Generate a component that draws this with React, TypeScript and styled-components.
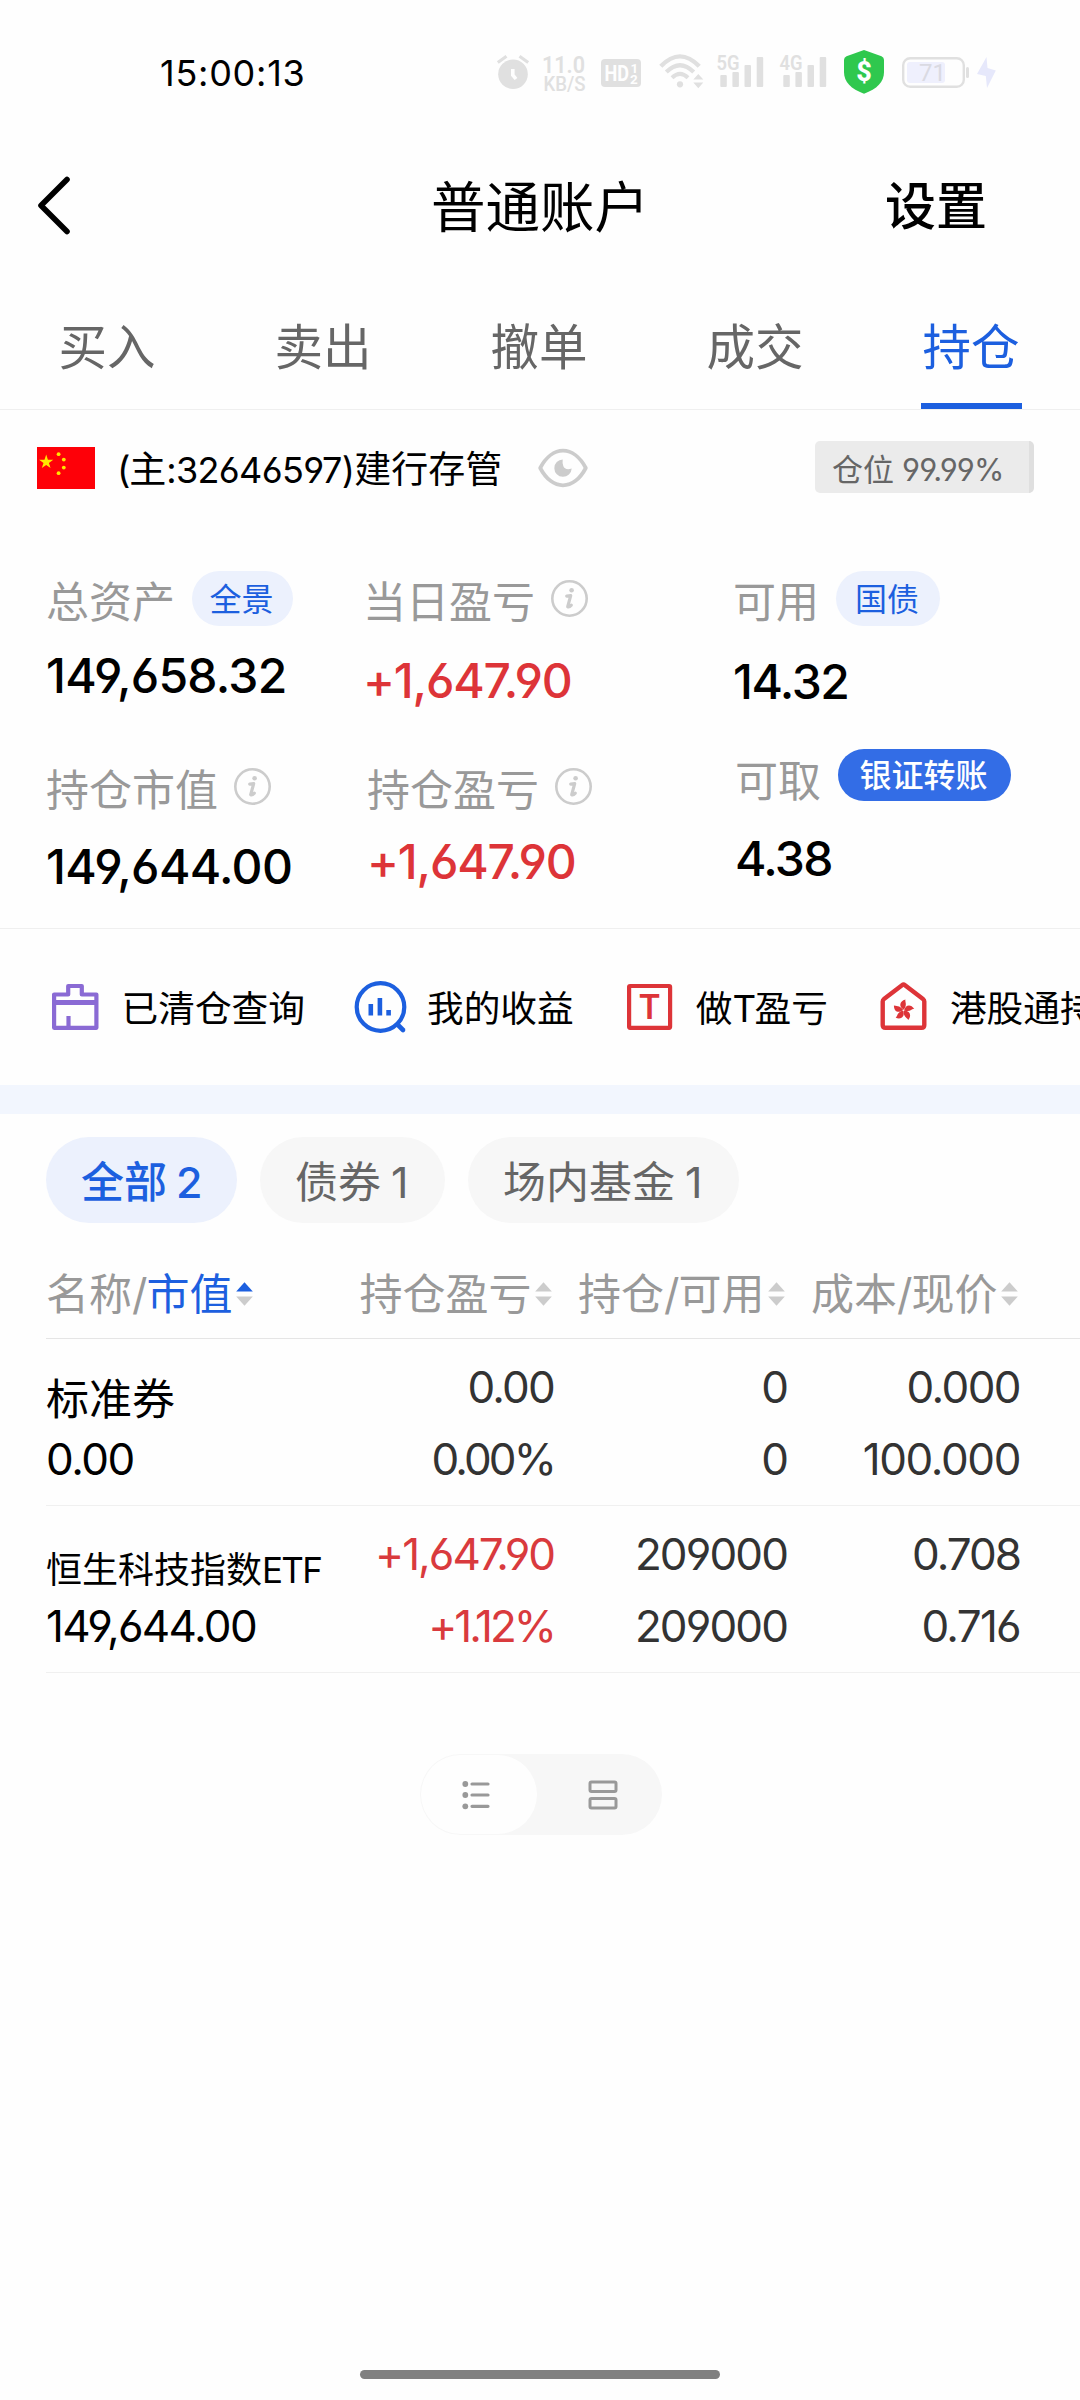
import React from "react";
import styled, { createGlobalStyle } from "styled-components";

const BLUE = "#1c5fdf";
const RED = "#dd3438";
const FAINT = "#e0e0e0";

const GlobalStyle = createGlobalStyle`
  * { box-sizing: border-box; }
  body { margin: 0; background: #fefefe; }
`;

const Page = styled.div`
  width: 1080px;
  height: 2400px;
  display: flex;
  flex-direction: column;
  overflow: hidden;
  background: #fefefe;
  color: #000;
  font-family: "Inter", "Noto Sans CJK SC", sans-serif;
  font-feature-settings: "cv03", "cv04";
  white-space: nowrap;
`;

const Icon = styled.svg<{ $ml?: number }>`
  display: block;
  flex: none;
  overflow: visible;
  margin-left: ${(p) => p.$ml ?? 0}px;
`;

/* ---------- status bar ---------- */

const StatusBar = styled.header`
  height: 144px;
  flex: none;
  display: flex;
  align-items: center;
  padding-left: 160px;
`;

const Clock = styled.div`
  width: 336px;
  padding-top: 1px;
  font-size: 36px;
  font-weight: 420;
  line-height: 44px;
  letter-spacing: 0.75px;
`;

/* ---------- title ---------- */

const TitleBar = styled.div`
  height: 123px;
  flex: none;
  display: grid;
  grid-template-columns: 200px 1fr 200px;
  align-items: center;
`;

const Title = styled.h1`
  margin: 0;
  padding-top: 2px;
  font-size: 54.5px;
  font-weight: 400;
  line-height: 64px;
  text-align: center;
`;

const Settings = styled.div`
  padding: 2px 0 0 5px;
  font-size: 51px;
  font-weight: 500;
  line-height: 64px;
`;

/* ---------- tabs ---------- */

const Tabs = styled.nav`
  height: 143px;
  flex: none;
  display: grid;
  grid-template-columns: repeat(5, 1fr);
  border-bottom: 1px solid #efefef;
`;

const Tab = styled.div<{ $active?: boolean }>`
  display: flex;
  flex-direction: column;
  align-items: center;
  padding: 51px 2px 0 0;
  font-size: 48.5px;
  line-height: 60px;
  color: ${(p) => (p.$active ? BLUE : "#666")};
`;

const TabMark = styled.div`
  width: 101px;
  height: 6px;
  margin-top: auto;
  background: ${BLUE};
`;

/* ---------- account ---------- */

const Account = styled.div`
  height: 115px;
  flex: none;
  display: flex;
  align-items: center;
  padding: 0 46px 0 37px;
`;

const AccountName = styled.div`
  width: 421px;
  margin-left: 22px;
  padding-top: 4px;
  font-size: 37px;
  line-height: 44px;
`;

const Position = styled.div`
  width: 219px;
  height: 52px;
  margin: 0 0 2px auto;
  padding: 2px 0 0 17px;
  border-radius: 5px;
  border-right: 5px solid #dfdfdf;
  background: #ebebeb;
  color: #666;
  font-size: 31px;
  line-height: 54px;
`;

const Num = styled.span<{ $track?: number; $size?: number; $ml?: number }>`
  letter-spacing: ${(p) => p.$track ?? 0}px;
  font-size: ${(p) => (p.$size ? p.$size + "px" : "inherit")};
  margin-left: ${(p) => p.$ml ?? 0}px;
`;

/* ---------- figures ---------- */

const Figures = styled.section`
  height: 404px;
  flex: none;
  padding-top: 46px;
  border-bottom: 1px solid #efefef;
`;

const FigureRow = styled.div<{ $cols: string }>`
  height: 178px;
  display: grid;
  grid-template-columns: ${(p) => p.$cols};
  padding-left: 46px;
`;

const Figure = styled.div<{ $top?: number }>`
  padding-top: ${(p) => p.$top ?? 0}px;
`;

const FigureHead = styled.div<{ $h?: number }>`
  height: ${(p) => p.$h ?? 55}px;
  display: flex;
  align-items: center;
`;

const FigureLabel = styled.span<{ $drop?: number }>`
  padding-top: ${(p) => p.$drop ?? 7}px;
  font-size: 43px;
  line-height: 50px;
  color: #999;
`;

const FigureValue = styled.div<{ $gap: number; $up?: boolean; $track?: number }>`
  margin-top: ${(p) => p.$gap}px;
  font-size: 48px;
  line-height: 60px;
  font-weight: 470;
  letter-spacing: ${(p) => p.$track ?? -1.2}px;
  color: ${(p) => (p.$up ? RED : "#000")};
`;

const Pill = styled.span<{ $w: number; $solid?: boolean }>`
  width: ${(p) => p.$w}px;
  height: ${(p) => (p.$solid ? 52 : 55)}px;
  margin-left: 17px;
  padding-right: 2px;
  border-radius: 28px;
  text-align: center;
  font-size: 32px;
  line-height: ${(p) => (p.$solid ? 54 : 58)}px;
  font-weight: ${(p) => (p.$solid ? 500 : 400)};
  color: ${(p) => (p.$solid ? "#fff" : BLUE)};
  background: ${(p) => (p.$solid ? "#336de6" : "#ecf1fd")};
`;

/* ---------- shortcuts ---------- */

const Shortcuts = styled.div`
  height: 156px;
  flex: none;
  display: flex;
  align-items: center;
  gap: 50.5px;
  padding-left: 50px;
  overflow: hidden;
`;

const Shortcut = styled.div`
  flex: none;
  display: flex;
  align-items: center;
  gap: 20.5px;
  font-size: 36.7px;
  line-height: 50px;
`;

const ShortcutText = styled.span`
  padding-top: 3px;
`;

const Band = styled.div`
  height: 29px;
  flex: none;
  background: #f2f6fe;
`;

/* ---------- filters ---------- */

const Chips = styled.div`
  height: 109px;
  flex: none;
  display: flex;
  gap: 23px;
  padding: 23px 0 0 46px;
`;

const Chip = styled.div<{ $w: number; $active?: boolean }>`
  width: ${(p) => p.$w}px;
  height: 86px;
  padding-left: 35px;
  border-radius: 43px;
  font-size: 43px;
  line-height: 90px;
  font-weight: ${(p) => (p.$active ? 500 : 400)};
  color: ${(p) => (p.$active ? BLUE : "#666")};
  background: ${(p) => (p.$active ? "#ecf1fd" : "#f7f7f7")};
`;

/* ---------- table ---------- */

const Table = styled.section`
  flex: none;
  margin-left: 46px;
`;

const HeadRow = styled.div`
  height: 116px;
  display: grid;
  grid-template-columns: 273px 233px 233px 233px;
  align-items: center;
  padding-top: 26px;
  border-bottom: 1px solid #e5e5e5;
  color: #999;
  font-size: 43px;
  line-height: 50px;
`;

const HeadCell = styled.div<{ $end?: boolean }>`
  display: flex;
  align-items: center;
  justify-content: ${(p) => (p.$end ? "flex-end" : "flex-start")};
`;

const Sorted = styled.span`
  color: ${BLUE};
`;

const Row = styled.div`
  height: 167px;
  display: grid;
  grid-template-columns: 275px 233px 233px 233px;
  border-bottom: 1px solid #f0f0f0;
  font-size: 44px;
  line-height: 52px;
`;

const NameCell = styled.div<{ $top: number }>`
  padding-top: ${(p) => p.$top}px;
  display: flex;
  flex-direction: column;
`;

const Name = styled.div<{ $size: number; $gap: number }>`
  font-size: ${(p) => p.$size}px;
  margin-bottom: ${(p) => p.$gap}px;
`;

const NumCell = styled.div<{ $up?: boolean }>`
  padding-top: 22px;
  display: flex;
  flex-direction: column;
  align-items: flex-end;
  gap: 20px;
  color: ${(p) => (p.$up ? "#d93a3d" : "#333")};
`;

/* ---------- bottom ---------- */

const Toggle = styled.div`
  width: 242px;
  height: 81px;
  flex: none;
  margin: 81px 0 0 420px;
  padding: 1px;
  display: flex;
  border-radius: 41px;
  background: #f7f7f7;
`;

const ToggleSide = styled.div<{ $on?: boolean }>`
  width: ${(p) => (p.$on ? 116 : 124)}px;
  flex: none;
  display: flex;
  align-items: center;
  justify-content: center;
  padding: ${(p) => (p.$on ? "0 6px 0 0" : "0 0 0 8px")};
  border-radius: 40px;
  background: ${(p) => (p.$on ? "#fefefe" : "transparent")};
`;

const HomeIndicator = styled.div`
  width: 360px;
  height: 9px;
  flex: none;
  margin: auto auto 21px;
  border-radius: 5px;
  background: #808080;
`;

const Info = () => (
  <Icon $ml={16} width="37" height="37" viewBox="-18.5 -18.5 37 37" fill="none" stroke="#ccc" strokeLinecap="round" strokeLinejoin="round">
    <circle r="17.2" strokeWidth="2.6" />
    <circle cx="2.1" cy="-8.2" r="2.3" fill="#ccc" stroke="none" />
    <path d="M-2.8 -2.4L1.2 -2.8L-1.8 8.2Q-0.2 8.8 1.8 6.6" strokeWidth="3.2" />
  </Icon>
);

const Arrows = ({ up }: { up?: boolean }) => (
  <Icon $ml={3.5} width="17" height="24" viewBox="0 0 17 24">
    <path d="M8.5 0.3L16.8 9.6H0.2Z" fill={up ? BLUE : "#ccc"} />
    <path d="M8.5 23.7L16.8 14.4H0.2Z" fill="#ccc" />
  </Icon>
);

const Signal = ({ label, ml }: { label: string; ml: number }) => (
  <Icon $ml={ml} width="48" height="44" viewBox="716 50 48 44" fill={FAINT}>
    <text x="716.5" y="70" fontFamily="Roboto" fontSize="20.5" fontWeight="600" textLength="23" lengthAdjust="spacingAndGlyphs">{label}</text>
    <rect x="720.3" y="75" width="6.5" height="12" rx="1" />
    <rect x="732.4" y="72" width="6.5" height="15" rx="1" />
    <rect x="744.5" y="65" width="6.5" height="22" rx="1" />
    <rect x="756.7" y="57" width="6.5" height="30" rx="1" />
  </Icon>
);

export default function App() {
  return (
    <Page>
      <GlobalStyle />
      <StatusBar>
        <Clock>15:00:13</Clock>
        <Icon width="34" height="44" viewBox="496 50 34 44">
          <circle cx="513" cy="74.3" r="14.8" fill={FAINT} />
          <path d="M497.8 62.5L506.5 56.3M528.2 62.5L519.5 56.3" stroke={FAINT} strokeWidth="3.2" />
          <path d="M512.8 69V75L516 79" stroke="#fefefe" strokeWidth="3.6" fill="none" />
        </Icon>
        <Icon $ml={11} width="46" height="44" viewBox="541 50 46 44" fill={FAINT} fontFamily="Roboto">
          <text x="542" y="73" fontSize="24" fontWeight="600" textLength="43" lengthAdjust="spacingAndGlyphs">11.0</text>
          <text x="543.5" y="91" fontSize="19.5" fontWeight="500" textLength="42" lengthAdjust="spacingAndGlyphs">KB/S</text>
        </Icon>
        <Icon $ml={13} width="42" height="44" viewBox="600 50 42 44" fill="#fefefe" fontFamily="Roboto">
          <rect x="601" y="59" width="40" height="28" rx="4" fill={FAINT} />
          <text x="604.5" y="81" fontSize="22.5" fontWeight="700" textLength="24.5" lengthAdjust="spacingAndGlyphs">HD</text>
          <text x="630.5" y="72.5" fontSize="13.5" fontWeight="700">1</text>
          <text x="630" y="84" fontSize="13.5" fontWeight="700">2</text>
        </Icon>
        <Icon $ml={16} width="46" height="44" viewBox="658 50 46 44" fill="none" stroke={FAINT}>
          <path d="M660.8 66.3Q680 46.5 699.2 66.3" strokeWidth="4.4" />
          <path d="M666.3 72Q680 58.3 693.7 72" strokeWidth="4.2" />
          <path d="M672 77.8Q680 70 688 77.8" strokeWidth="4" />
          <circle cx="680" cy="84.3" r="3.1" fill={FAINT} stroke="none" />
          <path d="M698.3 74L703.3 79.6H693.3ZM698.3 88.2L703.3 82.6H693.3Z" fill={FAINT} stroke="none" />
        </Icon>
        <Signal label="5G" ml={12} />
        <Signal label="4G" ml={15.4} />
        <Icon $ml={15.6} width="42" height="44" viewBox="843 50 42 44">
          <path d="M864 50L881.5 56.2Q884 57.2 884 60V72C884 82 877 89 864 93.7C851 89 844 82 844 72V60Q844 57.2 846.5 56.2Z" fill="#2fc84e" />
          <text x="864" y="81" fontFamily="Roboto" fontSize="27" fontWeight="800" fill="#fff" textAnchor="middle">$</text>
        </Icon>
        <Icon $ml={16} width="69" height="44" viewBox="901 50 69 44">
          <rect x="903.2" y="58.2" width="60.6" height="28.6" rx="7" fill="none" stroke={FAINT} strokeWidth="2.4" />
          <rect x="907" y="62" width="38" height="21" rx="3" fill="#eff0fd" />
          <rect x="966" y="67" width="3" height="11" rx="1.5" fill={FAINT} />
          <text x="919" y="81" fontFamily="Roboto" fontSize="24" fill="#dadae2" textLength="27" lengthAdjust="spacingAndGlyphs">71</text>
        </Icon>
        <Icon $ml={6} width="22" height="44" viewBox="976 50 22 44">
          <path d="M986.5 57L977 74L985.8 76L987 88L995.8 70.5L987.5 68Z" fill="#e6e8fb" />
        </Icon>
      </StatusBar>

      <TitleBar>
        <Icon $ml={37} width="34" height="60" viewBox="0 0 34 60">
          <path d="M30 3.5L4 29.5L30 55.5" fill="none" stroke="#000" strokeWidth="5.6" strokeLinecap="round" strokeLinejoin="round" />
        </Icon>
        <Title>普通账户</Title>
        <Settings>设置</Settings>
      </TitleBar>

      <Tabs>
        <Tab>买入</Tab>
        <Tab>卖出</Tab>
        <Tab>撤单</Tab>
        <Tab>成交</Tab>
        <Tab $active>持仓<TabMark /></Tab>
      </Tabs>

      <Account>
        <Icon width="58" height="42" viewBox="0 0 58 42">
          <rect width="58" height="42" fill="#fe0008" />
          <g fill="#ffe600">
            <path d="M9.2 7.5L10.9 12.7H16.3L11.9 15.9L13.6 21.1L9.2 17.9L4.8 21.1L6.5 15.9L2.1 12.7H7.5Z" />
            <circle cx="21.6" cy="7.2" r="1.9" />
            <circle cx="26.8" cy="12.6" r="1.9" />
            <circle cx="26.8" cy="20.6" r="1.9" />
            <circle cx="21.6" cy="26.2" r="1.9" />
          </g>
        </Icon>
        <AccountName>
          <Num $track={-1.3}>(</Num>主<Num $track={-0.65} $size={36}>:32646597)</Num>建行存管
        </AccountName>
        <Icon width="50" height="40" viewBox="-25 -20 50 40">
          <path d="M-22.8 0C-17 -11 -8.5 -17.3 0 -17.3S17 -11 22.8 0C17 11 8.5 17.3 0 17.3S-17 11 -22.8 0Z" fill="none" stroke="#ccc" strokeWidth="3.8" strokeLinejoin="round" />
          <path d="M-0.3 -8.6A8.7 8.7 0 1 0 8.7 0.6Q2 2.5 0.3 -2Q-0.8 -5 -0.3 -8.6Z" fill="#ccc" />
        </Icon>
        <Position>
          仓位<Num $track={-0.9} $ml={8}>99.99%</Num>
        </Position>
      </Account>

      <Figures>
        <FigureRow $cols="317px 370px 1fr">
          <Figure>
            <FigureHead><FigureLabel>总资产</FigureLabel><Pill $w={101}>全景</Pill></FigureHead>
            <FigureValue $gap={20} $track={-0.75}>149,658.32</FigureValue>
          </Figure>
          <Figure>
            <FigureHead><FigureLabel>当日盈亏</FigureLabel><Info /></FigureHead>
            <FigureValue $gap={25} $up>+1,647.90</FigureValue>
          </Figure>
          <Figure>
            <FigureHead><FigureLabel>可用</FigureLabel><Pill $w={104}>国债</Pill></FigureHead>
            <FigureValue $gap={26} $track={-1.5}>14.32</FigureValue>
          </Figure>
        </FigureRow>
        <FigureRow $cols="321px 368px 1fr">
          <Figure $top={10}>
            <FigureHead><FigureLabel>持仓市值</FigureLabel><Info /></FigureHead>
            <FigureValue $gap={23} $track={-0.65}>149,644.00</FigureValue>
          </Figure>
          <Figure $top={10}>
            <FigureHead><FigureLabel>持仓盈亏</FigureLabel><Info /></FigureHead>
            <FigureValue $gap={18} $up>+1,647.90</FigureValue>
          </Figure>
          <Figure>
            <FigureHead $h={52}><FigureLabel $drop={12}>可取</FigureLabel><Pill $w={173} $solid>银证转账</Pill></FigureHead>
            <FigureValue $gap={28} $track={-1.7}>4.38</FigureValue>
          </Figure>
        </FigureRow>
      </Figures>

      <Shortcuts>
        <Shortcut>
          <Icon width="51" height="52" viewBox="50 981 51 52" fill="none" stroke="#8a6ad4" strokeWidth="4.2" strokeLinejoin="round">
            <path d="M54.1 994.5H68.2V986H81.8V994.5H96.4V1027.8H54.1Z" />
            <path d="M54 1002.5H96.4" strokeWidth="4.8" />
            <path d="M68.5 1016V1027" />
          </Icon>
          <ShortcutText>已清仓查询</ShortcutText>
        </Shortcut>
        <Shortcut>
          <Icon width="51" height="52" viewBox="355.5 981 51 52" fill="none" stroke={BLUE} strokeWidth="4.2">
            <circle cx="381" cy="1007" r="23.8" />
            <path d="M398 1024.5L403.5 1030" strokeLinecap="round" strokeWidth="4.6" />
            <path d="M371.3 1004V1015.6M380.4 998V1015.6M389.1 1010V1015.6" strokeWidth="4.6" />
          </Icon>
          <ShortcutText>我的收益</ShortcutText>
        </Shortcut>
        <Shortcut>
          <Icon width="51" height="52" viewBox="624.5 981 51 52">
            <rect x="629.6" y="986" width="41" height="41.8" rx="1" fill="none" stroke={RED} strokeWidth="4.2" />
            <text x="650.1" y="1019.3" fontFamily="Inter" fontSize="33.5" fontWeight="600" fill={RED} textAnchor="middle">T</text>
          </Icon>
          <ShortcutText>做<Num $track={-1.6}>T</Num>盈亏</ShortcutText>
        </Shortcut>
        <Shortcut>
          <Icon width="51" height="52" viewBox="877.5 981 51 52">
            <path d="M882.2 1001.5Q882.2 1000 883.5 999L901.5 985.2Q903 984 904.5 985.2L922.5 999Q923.8 1000 923.8 1001.5V1025Q923.8 1027.8 921 1027.8H885Q882.2 1027.8 882.2 1025Z" fill="none" stroke={RED} strokeWidth="4.4" strokeLinejoin="round" />
            <g fill={RED} transform="translate(903 1010.3) rotate(4)">
              {[0, 72, 144, 216, 288].map((a) => (
                <path key={a} transform={`rotate(${a})`} d="M0.3 -0.5C-5 -3 -5 -8.6 1.2 -10.8C0.6 -8.4 3.8 -6 0.3 -0.5Z" />
              ))}
            </g>
          </Icon>
          <ShortcutText>港股通持仓</ShortcutText>
        </Shortcut>
      </Shortcuts>

      <Band />

      <Chips>
        <Chip $w={191} $active>全部<Num $ml={9}>2</Num></Chip>
        <Chip $w={185}>债券<Num $ml={10}>1</Num></Chip>
        <Chip $w={271}>场内基金<Num $ml={10}>1</Num></Chip>
      </Chips>

      <Table>
        <HeadRow>
          <HeadCell>名称<Num $track={-1}>/</Num><Sorted>市值</Sorted><Arrows up /></HeadCell>
          <HeadCell $end>持仓盈亏<Arrows /></HeadCell>
          <HeadCell $end>持仓<Num $track={-1}>/</Num>可用<Arrows /></HeadCell>
          <HeadCell $end>成本<Num $track={-1}>/</Num>现价<Arrows /></HeadCell>
        </HeadRow>
        <Row>
          <NameCell $top={34}>
            <Name $size={43} $gap={8}>标准券</Name>
            <Num $track={-1.5}>0.00</Num>
          </NameCell>
          <NumCell><Num $track={-1.8}>0.00</Num><Num $track={-2.9}>0.00%</Num></NumCell>
          <NumCell><Num $track={-2}>0</Num><Num $track={-2}>0</Num></NumCell>
          <NumCell><Num $track={-1.6}>0.000</Num><Num $track={-1.4}>100.000</Num></NumCell>
        </Row>
        <Row>
          <NameCell $top={38}>
            <Name $size={36} $gap={4}>恒生科技指数<Num $track={-1.7} $size={35}>ETF</Num></Name>
            <Num $track={-1.65}>149,644.00</Num>
          </NameCell>
          <NumCell $up><Num $track={-2}>+1,647.90</Num><Num $track={-3}>+1.12%</Num></NumCell>
          <NumCell><Num $track={-1.9}>209000</Num><Num $track={-1.9}>209000</Num></NumCell>
          <NumCell><Num $track={-2}>0.708</Num><Num $track={-1.7}>0.716</Num></NumCell>
        </Row>
      </Table>

      <Toggle>
        <ToggleSide $on>
          <Icon width="30" height="30" viewBox="0 0 30 30" stroke="#999" strokeWidth="3.2" strokeLinecap="round">
            <path d="M11 4H27M11 15H27M11 26.3H27" />
            <g fill="#999" stroke="none">
              <circle cx="4.3" cy="4" r="2.9" />
              <circle cx="4.3" cy="15" r="2.9" />
              <circle cx="4.3" cy="26.3" r="2.9" />
            </g>
          </Icon>
        </ToggleSide>
        <ToggleSide>
          <Icon width="30" height="32" viewBox="0 0 30 32" fill="none" stroke="#999" strokeWidth="3">
            <rect x="2" y="3" width="26" height="9.5" rx="1.5" />
            <rect x="2" y="19.5" width="26" height="9.5" rx="1.5" />
          </Icon>
        </ToggleSide>
      </Toggle>

      <HomeIndicator />
    </Page>
  );
}
